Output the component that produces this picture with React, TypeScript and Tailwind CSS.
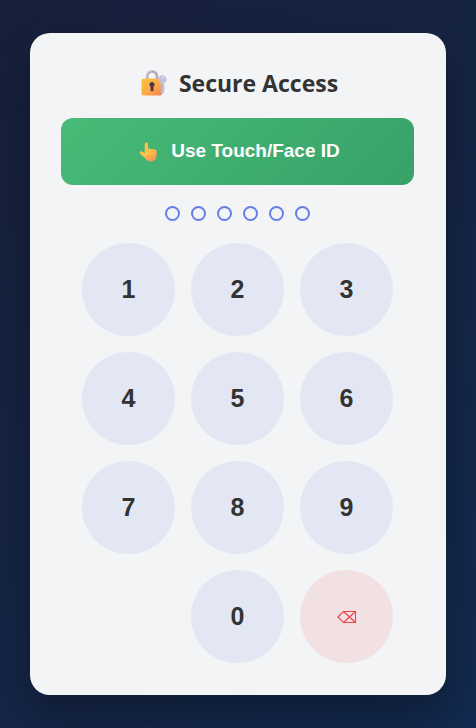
import React from 'react';

const digits = ['1', '2', '3', '4', '5', '6', '7', '8', '9'];

function LockIcon() {
  return (
    <svg viewBox="0 0 26 26" className="ml-1 h-[26px] w-[26px] shrink-0" aria-hidden="true">
      <defs>
        <linearGradient id="lockBody" x1="0" y1="0" x2="1" y2="1">
          <stop offset="0" stopColor="#fdc23f" />
          <stop offset="0.55" stopColor="#fcaa43" />
          <stop offset="1" stopColor="#f47f50" />
        </linearGradient>
      </defs>
      <path d="M6.200 10V6.400a4.900 4.900 0 0 1 9.800 0V10" fill="none" stroke="#b0a8b8" strokeWidth="2.600" />
      <path d="M5.700 9V6.200a5.200 5.200 0 0 1 5.300-5.100" fill="none" stroke="#d3cdd9" strokeWidth="0.9" />
      <rect x="0.500" y="8.500" width="20.500" height="17" rx="2" fill="url(#lockBody)" />
      <path d="M11 12a2.600 2.600 0 0 1 1.400 4.800v3.300a1.400 1.400 0 0 1-2.800 0v-3.300A2.600 2.600 0 0 1 11 12z" fill="#4a3353" />
      <path
        fillRule="evenodd"
        d="M21.300 5.200a4.200 4.200 0 0 1 1.800 8v2.300l.8 1-.8 1.200.8 1.200-.8 1.200v2.400l-1.400 1.500-2-1.300v-9.500a4.200 4.200 0 0 1 1.600-8zm1 1.500a.9.9 0 1 0 0 1.800.9.9 0 0 0 0-1.800z"
        fill="#c9bfda"
      />
      <path d="M20.700 14v8.500" stroke="#ac9fc3" strokeWidth="0.7" />
    </svg>
  );
}

function PointerIcon() {
  return (
    <svg viewBox="0 0 20 20" className="ml-1 h-5 w-5 shrink-0" aria-hidden="true">
      <defs>
        <linearGradient id="handSkin" x1="0" y1="0" x2="0.5" y2="1">
          <stop offset="0" stopColor="#f9b83b" />
          <stop offset="0.65" stopColor="#ffc44f" />
          <stop offset="1" stopColor="#f59a55" />
        </linearGradient>
      </defs>
      <path
        d="M5.700 1.900a1.700 1.700 0 0 1 3.400 0v5.100c.6-.6 2.300-.5 2.900.3.700-.6 2.200-.3 2.700.5 1-.5 2.900 0 2.900 1.600v3.500c0 3.600-2.300 6.600-5.700 6.600-2.800 0-4.800-1.300-6-3.500L1.200 11.800c-1.200-1.400.2-3.100 1.800-2.300l2.700 1.500z"
        fill="url(#handSkin)"
      />
      <path d="M9.100 7.500v2.600m2.900-2.300v2.500m2.700-2.100v2.300" fill="none" stroke="#eda03a" strokeWidth="0.5" strokeLinecap="round" />
    </svg>
  );
}

function BackspaceIcon() {
  return (
    <svg viewBox="0 0 20 14" className="h-[14px] w-5" fill="none" stroke="#ef4444" strokeWidth="1.1" aria-hidden="true">
      <path d="M.9 7 6.500 1.500h12v11h-12zM6.500 1.500l12 11M18.500 1.500l-12 11" />
    </svg>
  );
}

function DigitKey({ digit, className = '' }: { digit: string; className?: string }) {
  return (
    <button
      type="button"
      className={`flex aspect-square items-center justify-center rounded-full bg-[#e3e7f4] font-['Liberation_Sans',Arial,sans-serif] text-[25px] font-bold text-[#333333] ${className}`}
    >
      {digit}
    </button>
  );
}

export default function App() {
  return (
    <div className="flex min-h-screen items-center justify-center bg-linear-135 from-[#171f3a] to-[#122a4f] px-[30px] py-8">
      <main className="w-full max-w-[420px] rounded-[20px] bg-[#f3f4f6] pt-[31px] pr-8 pb-8 pl-[31px] shadow-[0_20px_40px_rgba(0,0,0,0.3)]">
        <h1 className="flex h-[38px] items-center justify-center gap-3 font-['Open_Sans','Noto_Sans',sans-serif] text-[23px] font-bold text-[#333333]">
          <LockIcon />
          Secure Access
        </h1>

        <button
          type="button"
          className="mt-4 flex h-[67px] w-full items-center justify-center gap-3 rounded-xl bg-linear-135 from-[#48bb78] to-[#38a169] font-['Liberation_Sans',Arial,sans-serif] text-[19px] font-bold text-white"
        >
          <PointerIcon />
          Use Touch/Face ID
        </button>

        <div className="mt-[21px] flex justify-center gap-[11px]" role="img" aria-label="0 of 6 digits entered">
          {[0, 1, 2, 3, 4, 5].map((i) => (
            <span key={i} className="h-[15px] w-[15px] rounded-full border-2 border-[#667eea]" />
          ))}
        </div>

        <div className="mt-[22px] grid grid-cols-3 gap-4 px-[21px]">
          {digits.map((d) => (
            <DigitKey key={d} digit={d} />
          ))}
          <DigitKey digit="0" className="col-start-2" />
          <button
            type="button"
            aria-label="Delete"
            className="flex aspect-square items-center justify-center rounded-full bg-[#f1e1e3]"
          >
            <BackspaceIcon />
          </button>
        </div>
      </main>
    </div>
  );
}
